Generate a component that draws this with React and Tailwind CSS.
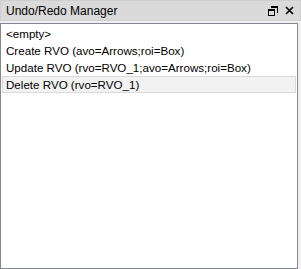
import React from "react";

const rows = [
  "<empty>",
  "Create RVO (avo=Arrows;roi=Box)",
  "Update RVO (rvo=RVO_1;avo=Arrows;roi=Box)",
  "Delete RVO (rvo=RVO_1)",
];

export default function App() {
  return (
    <div
      className="w-[301px] h-[269px] bg-[#f0f0f0] flex flex-col overflow-hidden text-[12px] text-black"
      style={{ fontFamily: '"Liberation Sans", sans-serif' }}
    >
      <div className="h-[21px] shrink-0 bg-[#dadada] border border-[#cfcfcf] flex items-center pl-[5px] pr-[6px]">
        <span className="flex-1 leading-none">Undo/Redo Manager</span>
        <svg width="10" height="10" viewBox="0 0 10 10" className="mr-[7px]">
          <path d="M3 0.5h6.5v6.5" fill="none" stroke="#000" strokeWidth="1" />
          <rect x="3" y="0" width="7" height="2" fill="#000" />
          <rect x="0.5" y="3.5" width="6" height="6" fill="none" stroke="#000" strokeWidth="1" />
          <rect x="0" y="3" width="7" height="2" fill="#000" />
        </svg>
        <svg width="9" height="9" viewBox="0 0 9 9">
          <path d="M1 1L8 8M8 1L1 8" stroke="#000" strokeWidth="1.7" />
        </svg>
      </div>
      <div className="h-[2px] shrink-0" />
      <div className="flex-1 mr-[3px] bg-white border border-[#828790] pt-[1px] px-[1px] text-[11.6px]">
        {rows.map((r, i) => (
          <div
            key={i}
            className={
              "h-[17px] flex items-center pl-[3px] border whitespace-nowrap " +
              (i === 3 ? "bg-[#f2f2f2] border-[#dadada]" : "border-transparent")
            }
          >
            {r}
          </div>
        ))}
      </div>
    </div>
  );
}
